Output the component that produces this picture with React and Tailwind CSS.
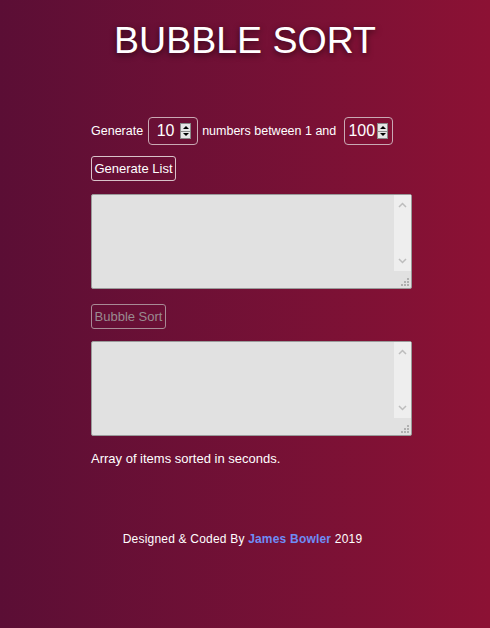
import React from 'react'

function Spinner() {
  return (
    <div className="flex h-[16px] w-[11px] flex-col border border-[#8a8a8a] bg-[#e6e6e6]">
      <div className="flex flex-1 items-center justify-center border-b border-[#8a8a8a]">
        <div className="h-0 w-0 border-x-[3px] border-b-[3px] border-x-transparent border-b-black" />
      </div>
      <div className="flex flex-1 items-center justify-center">
        <div className="h-0 w-0 border-x-[3px] border-t-[3px] border-x-transparent border-t-black" />
      </div>
    </div>
  )
}

function NumberBox({ value, width, pad }) {
  return (
    <div
      className={`flex h-[28px] ${width} ${pad} items-center rounded-[4px] border border-[#c9a9b4] text-[16px] text-white`}
    >
      <span className="flex-1 text-center">{value}</span>
      <Spinner />
    </div>
  )
}

function Chevron({ up }) {
  return (
    <svg width="9" height="6" viewBox="0 0 9 6" fill="none" stroke="#bdbdbd" strokeWidth="1.5">
      {up ? <polyline points="1,5 4.5,1.5 8,5" /> : <polyline points="1,1 4.5,4.5 8,1" />}
    </svg>
  )
}

function FakeTextarea() {
  return (
    <div className="flex h-[95px] w-[321px] flex-col rounded-[2px] border border-[#9a9a9a] bg-[#e1e1e1]">
      <div className="flex h-[76px]">
        <div className="flex-1" />
        <div className="flex w-[17px] flex-col items-center justify-between bg-[#eeeeee] py-[7px]">
          <Chevron up />
          <Chevron />
        </div>
      </div>
      <div className="flex flex-1 items-end justify-end pb-[2px] pr-[2px]">
        <svg width="8" height="8" viewBox="0 0 8 8" fill="#b0b0b0">
          <rect x="6" y="0" width="2" height="2" />
          <rect x="3" y="3" width="2" height="2" />
          <rect x="6" y="3" width="2" height="2" />
          <rect x="0" y="6" width="2" height="2" />
          <rect x="3" y="6" width="2" height="2" />
          <rect x="6" y="6" width="2" height="2" />
        </svg>
      </div>
    </div>
  )
}

export default function App() {
  return (
    <div className="flex h-[628px] w-full flex-col items-center bg-gradient-to-r from-[#5b0e35] to-[#8c1134] font-['Liberation_Sans',Arial,sans-serif] text-white">
      <h1 className="mt-[18px] text-[37.5px] leading-[44px] [text-shadow:0_2px_6px_rgba(0,0,0,0.6)]">
        BUBBLE SORT
      </h1>

      <div className="ml-[13px] mt-[55px] flex w-[321px] flex-col">
        <div className="flex items-center text-[12.5px]">
          <span className="mr-[5px]">Generate</span>
          <NumberBox value="10" width="w-[50px]" pad="pr-[6px] pl-[2px]" />
          <span className="ml-[4px] mr-[8px]">numbers between 1 and</span>
          <NumberBox value="100" width="w-[49px]" pad="pr-[4px] pl-[1px]" />
        </div>

        <button className="mt-[11px] h-[25px] w-[85px] rounded-[3px] border border-[#d8c2c9] text-[13px] text-white">
          Generate List
        </button>

        <div className="mt-[13px]">
          <FakeTextarea />
        </div>

        <button className="mt-[15px] h-[25px] w-[75px] rounded-[3px] border border-[#a88a95] text-[13px] text-[#9a8a90]">
          Bubble Sort
        </button>

        <div className="mt-[12px]">
          <FakeTextarea />
        </div>

        <p className="mt-[15px] text-[13px] leading-[16px]">Array of items sorted in seconds.</p>
      </div>

      <p className="mr-[5px] mt-[63px] text-[12px] tracking-[0.2px]">
        Designed &amp; Coded By <span className="font-bold text-[#6e8cf5]">James Bowler</span> 2019
      </p>
    </div>
  )
}
